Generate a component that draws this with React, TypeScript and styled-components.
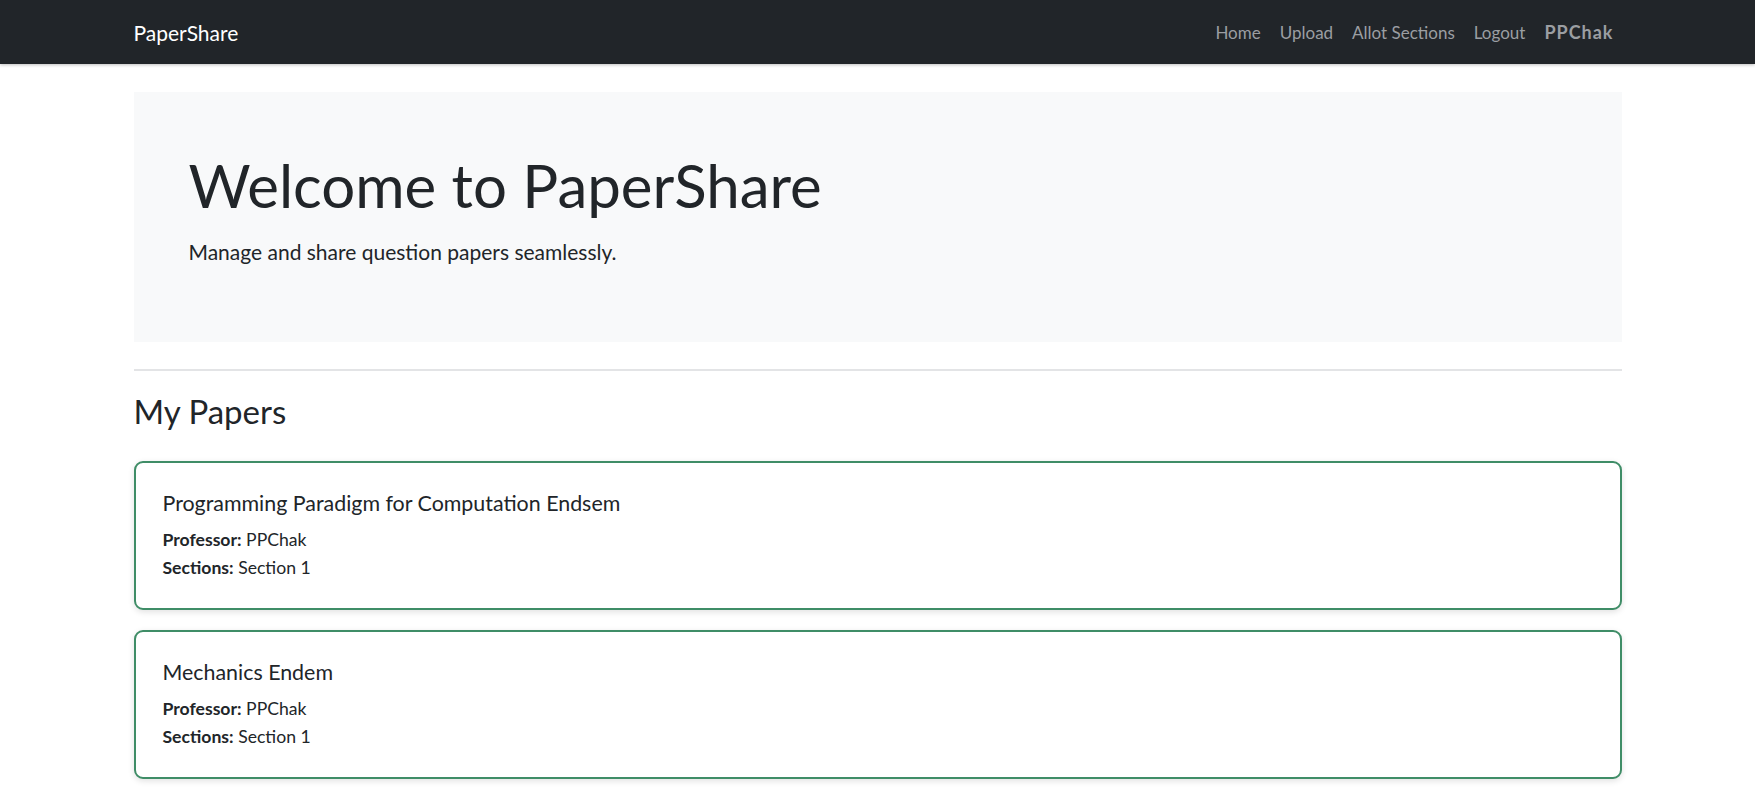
import React from "react";
import styled, { createGlobalStyle } from "styled-components";

const GlobalStyle = createGlobalStyle`
  * { box-sizing: border-box; }
  body {
    margin: 0;
    background: #ffffff;
    color: #212529;
    font-family: Lato, "Open Sans", sans-serif;
  }
`;

const Navbar = styled.nav`
  height: 64px;
  background: #212529;
  box-shadow: 0 1px 3px rgba(0, 0, 0, 0.25);
`;

const Container = styled.div`
  width: 1488px;
  margin: 0 auto;
`;

const NavInner = styled(Container)`
  height: 100%;
  display: flex;
  align-items: center;
  justify-content: space-between;
`;

const Brand = styled.a`
  color: #ffffff;
  font-size: 21px;
  text-decoration: none;
`;

const NavList = styled.div`
  display: flex;
  align-items: center;
  gap: 19px;
  padding-right: 8px;
`;

const NavLink = styled.a<{ $bold?: boolean }>`
  color: #9b9ea2;
  font-size: ${(p) => (p.$bold ? "18px" : "17px")};
  font-weight: ${(p) => (p.$bold ? 700 : 400)};
  letter-spacing: ${(p) => (p.$bold ? "1px" : "0")};
  text-decoration: none;
`;

const Main = styled(Container)`
  padding-top: 28px;
  padding-bottom: 28px;
`;

const Jumbotron = styled.section`
  background: #f8f9fa;
  height: 250px;
  padding: 57px 55px 0;
`;

const Display = styled.h1`
  margin: 0;
  font-size: 60px;
  font-weight: 400;
  line-height: 1.2;
`;

const Lead = styled.p`
  margin: 17px 0 0;
  font-size: 21px;
  line-height: 1.3;
`;

const Rule = styled.hr`
  margin: 27px 0 0;
  border: 0;
  border-top: 2px solid #e3e4e6;
`;

const SectionTitle = styled.h2`
  margin: 21px 0 0;
  font-size: 33px;
  font-weight: 400;
  line-height: 1.2;
`;

const CardList = styled.div`
  margin-top: 29px;
  display: flex;
  flex-direction: column;
  gap: 20px;
`;

const Card = styled.article`
  height: 149px;
  border: 2px solid #3f8d67;
  border-radius: 9px;
  background: #fff;
  box-shadow: 0 2px 6px rgba(0, 0, 0, 0.12);
  padding: 28px 27px 0;
`;

const CardTitle = styled.h5`
  margin: 0;
  font-size: 21.4px;
  font-weight: 400;
  line-height: 1.2;
`;

const Meta = styled.p`
  margin: 0;
  font-size: 17.6px;
  line-height: 28px;
  &:first-of-type {
    margin-top: 10px;
  }
`;

const papers = [
  { title: "Programming Paradigm for Computation Endsem", professor: "PPChak", sections: "Section 1" },
  { title: "Mechanics Endem", professor: "PPChak", sections: "Section 1" },
];

export default function App() {
  return (
    <>
      <GlobalStyle />
      <Navbar>
        <NavInner>
          <Brand href="#">PaperShare</Brand>
          <NavList>
            <NavLink href="#">Home</NavLink>
            <NavLink href="#">Upload</NavLink>
            <NavLink href="#">Allot Sections</NavLink>
            <NavLink href="#">Logout</NavLink>
            <NavLink $bold>PPChak</NavLink>
          </NavList>
        </NavInner>
      </Navbar>
      <Main>
        <Jumbotron>
          <Display>Welcome to PaperShare</Display>
          <Lead>Manage and share question papers seamlessly.</Lead>
        </Jumbotron>
        <Rule />
        <SectionTitle>My Papers</SectionTitle>
        <CardList>
          {papers.map((p) => (
            <Card key={p.title}>
              <CardTitle>{p.title}</CardTitle>
              <Meta>
                <b>Professor:</b> {p.professor}
              </Meta>
              <Meta>
                <b>Sections:</b> {p.sections}
              </Meta>
            </Card>
          ))}
        </CardList>
      </Main>
    </>
  );
}
